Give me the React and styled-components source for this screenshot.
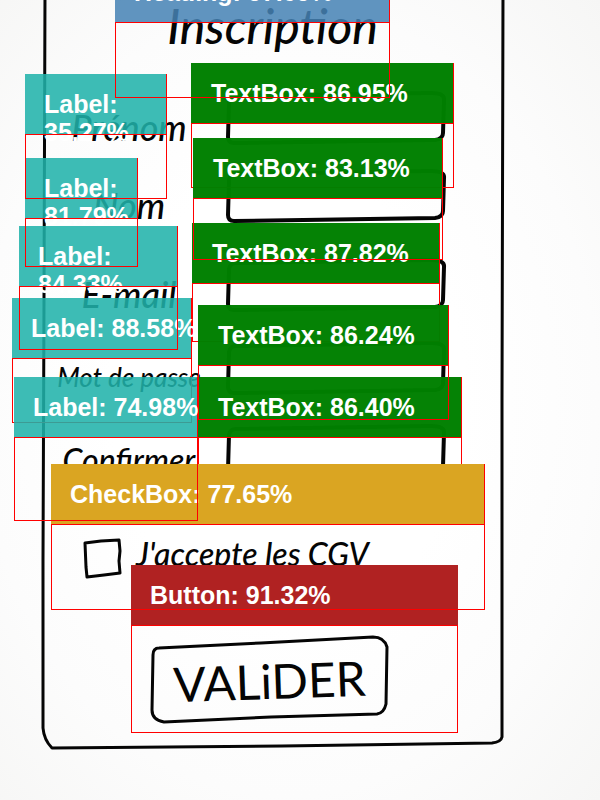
import React from "react";
import styled, { createGlobalStyle } from "styled-components";

const GlobalStyle = createGlobalStyle`
  *, *::before, *::after { box-sizing: border-box; }
  body { margin: 0; background: #fafafa; }
`;

const Page = styled.main`
  position: relative;
  min-height: 100vh;
  overflow: hidden;
  background: radial-gradient(ellipse at 48% 50%, #ffffff 40%, #fcfcfc 70%, #f6f6f5 100%);
`;

/* ---------- the hand-drawn form ---------- */

const Paper = styled.form`
  position: relative;
  margin: 0 97px 0 42px;
  padding: 0 0 26px;
  color: #050505;
  font-family: Lato, "Open Sans", sans-serif;
`;

const Stroke = styled.svg`
  position: absolute;
  inset: 0;
  width: 100%;
  height: 100%;
  overflow: visible;
  pointer-events: none;
  fill: none;
  stroke: #050505;
  stroke-width: ${(p) => p.$pen}px;
  stroke-linecap: round;
  stroke-linejoin: round;

  path { vector-effect: non-scaling-stroke; }
`;

const Title = styled.h1`
  margin: 0 0 37px;
  text-align: center;
  font-size: 48px;
  font-style: italic;
  font-weight: 500;
  line-height: 52px;
  padding-bottom: 4px;
`;

const Fields = styled.div`
  display: grid;
  grid-template-columns: 150px 1fr;
  grid-template-rows: 78px 89px 83px 83px 50px;
  column-gap: 22px;
  align-items: start;
  padding: 0 57px 0 12px;
`;

const FieldName = styled.label`
  padding-top: 16px;
  text-align: center;
  white-space: nowrap;
  font-size: ${(p) => (p.$long ? 26 : p.$wide ? 32 : 36)}px;
  font-style: italic;
  font-weight: 500;
  line-height: 36px;
`;

const FieldBox = styled.div`
  position: relative;
  height: 50px;
`;

const FieldInput = styled.input`
  width: 100%;
  height: 100%;
  padding: 0 12px;
  border: 0;
  outline: 0;
  background: transparent;
  font: italic 24px Lato, sans-serif;
`;

const Consent = styled.label`
  display: flex;
  align-items: center;
  gap: 16px;
  margin: 65px 0 0 42px;
  height: 36px;
  font-size: 32px;
  font-style: italic;
  font-weight: 500;
`;

const TickFrame = styled.span`
  position: relative;
  width: 36px;
  height: 36px;
`;

const Tick = styled.input`
  appearance: none;
  width: 100%;
  height: 100%;
  margin: 0;
`;

const ConsentText = styled.span`
  padding-bottom: 12px;
  white-space: nowrap;
`;

const Submit = styled.button`
  position: relative;
  display: block;
  width: 237px;
  height: 84px;
  margin: 61px 0 0 109px;
  padding: 0;
  border: 0;
  background: transparent;
  color: inherit;
  font-family: Lato, sans-serif;
  font-size: 48px;
  font-weight: 400;
`;

const SubmitText = styled.span`
  display: block;
  transform: rotate(-2deg);
`;

/* ---------- the detections over it ---------- */

const tones = {
  heading: "rgba(70, 130, 180, 0.86)",
  label: "rgba(32, 178, 170, 0.87)",
  textbox: "rgba(0, 128, 0, 0.98)",
  checkbox: "#daa522",
  button: "#b02222",
};

const Overlay = styled.div`
  position: absolute;
  inset: 0;
  pointer-events: none;
`;

const Tag = styled.div`
  position: absolute;
  z-index: 1;
  left: ${(p) => p.$x}px;
  top: ${(p) => p.$y}px;
  width: ${(p) => p.$w}px;
  height: 60px;
  padding: 16px 0 0 ${(p) => (p.$tone === "textbox" ? 20 : 19)}px;
  border-right: 1px solid ${(p) => (p.$tone === "button" ? "transparent" : "#ff0000")};
  background: ${(p) => tones[p.$tone]};
  color: #ffffff;
  font: bold 25px/28px "Liberation Sans", Arial, sans-serif;
  white-space: ${(p) => (p.$wrap ? "normal" : "nowrap")};
`;

const Outline = styled.div`
  position: absolute;
  z-index: ${(p) => (p.$front ? 2 : 0)};
  left: ${(p) => p.$x}px;
  top: ${(p) => p.$y + 60}px;
  width: ${(p) => p.$w}px;
  height: ${(p) => p.$h - 60}px;
  border: 1px solid #ff0000;
`;

const detections = [
  { tone: "heading", text: "Heading: 97.09%", x: 115, y: -38, w: 275, h: 136, front: true },
  { tone: "textbox", text: "TextBox: 86.95%", x: 191, y: 63, w: 263, h: 125 },
  { tone: "label", text: "Label: 35.27%", x: 25, y: 74, w: 142, h: 125, front: true, wrap: true },
  { tone: "textbox", text: "TextBox: 83.13%", x: 193, y: 138, w: 250, h: 122, front: true },
  { tone: "label", text: "Label: 81.79%", x: 25, y: 158, w: 113, h: 109, front: true, wrap: true },
  { tone: "textbox", text: "TextBox: 87.82%", x: 192, y: 223, w: 248, h: 119 },
  { tone: "label", text: "Label: 84.33%", x: 19, y: 226, w: 159, h: 124, front: true, wrap: true },
  { tone: "label", text: "Label: 88.58%", x: 12, y: 298, w: 180, h: 125 },
  { tone: "textbox", text: "TextBox: 86.24%", x: 198, y: 305, w: 251, h: 115, front: true },
  { tone: "textbox", text: "TextBox: 86.40%", x: 198, y: 377, w: 264, h: 125 },
  { tone: "label", text: "Label: 74.98%", x: 14, y: 377, w: 184, h: 144, front: true },
  { tone: "checkbox", text: "CheckBox: 77.65%", x: 51, y: 464, w: 434, h: 146, front: true },
  { tone: "button", text: "Button: 91.32%", x: 131, y: 565, w: 327, h: 168 },
];

function Detection({ tone, text, x, y, w, h, front, wrap }) {
  return (
    <>
      <Outline $x={x} $y={y} $w={w} $h={h} $front={front} />
      <Tag $tone={tone} $x={x} $y={y} $w={w} $wrap={wrap}>{text}</Tag>
    </>
  );
}

const fields = [
  { id: "prenom", name: "Prénom", type: "text" },
  { id: "nom", name: "Nom", type: "text" },
  { id: "email", name: "E-mail", type: "email" },
  { id: "password", name: "Mot de passe", type: "password", long: true },
  { id: "confirm", name: "Confirmer", type: "password", wide: true },
];

function Field({ id, name, type, long, wide }) {
  return (
    <>
      <FieldName htmlFor={id} $long={long} $wide={wide}>{name}</FieldName>
      <FieldBox>
        <FieldInput id={id} type={type} />
        <Stroke $pen={4} viewBox="0 0 220 50" preserveAspectRatio="none" aria-hidden="true">
          <path d="M3 9 Q4 3 10 3 L205 0 Q219 0 218 7 L217 40 Q217 46 209 47 L8 50 Q2 50 2 44 Z" />
        </Stroke>
      </FieldBox>
    </>
  );
}

export default function App() {
  return (
    <Page>
      <GlobalStyle />
      <Paper onSubmit={(e) => e.preventDefault()}>
        <Stroke $pen={3} viewBox="0 0 461 748" preserveAspectRatio="none" aria-hidden="true">
          <path d="M3 -8 L2 300 L1 560 L1 728 Q2 740 10 748 L240 746 L450 743 Q459 742 460 737 L460 400 L461 -8" />
        </Stroke>
        <Title>Inscription</Title>
        <Fields>
          {fields.map((f) => <Field key={f.id} {...f} />)}
        </Fields>
        <Consent>
          <TickFrame>
            <Tick type="checkbox" />
            <Stroke $pen={3} viewBox="0 0 36 36" preserveAspectRatio="none" aria-hidden="true">
              <path d="M1 2 L17 0 L35 -1 L36 10 L35 20 L36 32 L20 34 L3 36 L2 26 Z" />
            </Stroke>
          </TickFrame>
          <ConsentText>J'accepte les CGV</ConsentText>
        </Consent>
        <Submit type="submit">
          <Stroke $pen={3} viewBox="0 0 237 84" preserveAspectRatio="none" aria-hidden="true">
            <path d="M2 17 Q2 10 8 10 L110 5 L222 -1 Q233 -1 236 9 L235 66 Q233 75 226 76 L120 79 L13 84 Q1 82 1 72 Z" />
          </Stroke>
          <SubmitText>VALiDER</SubmitText>
        </Submit>
      </Paper>
      <Overlay>
        {detections.map((d) => <Detection key={d.text} {...d} />)}
      </Overlay>
    </Page>
  );
}
